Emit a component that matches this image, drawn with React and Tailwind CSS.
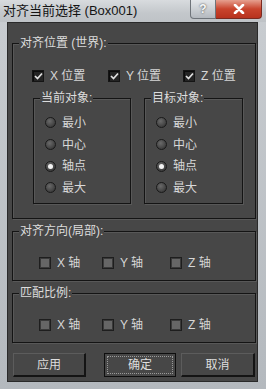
import React from "react";

const font = "font-['Liberation_Sans','Noto_Sans_CJK_SC',sans-serif]";

function Check({ checked }) {
  if (checked) {
    return (
      <span className="flex h-[12px] w-[12px] shrink-0 items-center justify-center border border-[#151515] bg-[#242424] shadow-[inset_1px_1px_0_#0c0c0c]">
        <svg width="9" height="8" viewBox="0 0 9 8">
          <path d="M1 4 L3.5 6.5 L8 1.5" fill="none" stroke="#e0e0e0" strokeWidth="1.7" />
        </svg>
      </span>
    );
  }
  return (
    <span className="flex h-[12px] w-[12px] shrink-0 items-center justify-center border border-[#1e1e1e] bg-[#3a3a3a]">
      <span className="h-[8px] w-[8px] bg-[#666666]" />
    </span>
  );
}

function Radio({ on }) {
  return (
    <span className="flex h-[11px] w-[11px] shrink-0 items-center justify-center rounded-full border border-[#1a1a1a] bg-[radial-gradient(circle_at_40%_35%,#6a6a6a,#2c2c2c)]">
      {on && <span className="h-[5px] w-[5px] rounded-full bg-[#f2f2f2]" />}
    </span>
  );
}

function Group({ label, className, children }) {
  return (
    <div className={"relative border border-[#141414] shadow-[inset_1px_1px_0_#585858,1px_1px_0_#585858] " + className}>
      <span className="absolute left-[6px] top-[-8px] bg-[#474747] px-[1px] text-[12px] leading-[14px] text-[#dcdcdc]">
        {label}
      </span>
      {children}
    </div>
  );
}

function Btn({ label, main }) {
  return (
    <div
      className={
        "flex h-[24px] items-center justify-center text-[12px] text-[#dedede] " +
        (main
          ? "border border-[#0e0e0e] bg-[#474747] p-[2px]"
          : "border-t border-l border-t-[#5c5c5c] border-l-[#5c5c5c] border-r-2 border-b-2 border-r-[#141414] border-b-[#141414] bg-[#474747]")
      }
    >
      {main ? (
        <span className="flex h-full w-full items-center justify-center border border-dotted border-[#9a9a9a]">
          {label}
        </span>
      ) : (
        label
      )}
    </div>
  );
}

function Item({ className, children, label }) {
  return (
    <div className={"flex shrink-0 items-center " + className}>
      {children}
      <span className="ml-[6px] whitespace-nowrap">{label}</span>
    </div>
  );
}

function AxisRow() {
  return (
    <div className="flex items-center pl-[26px] text-[12px] text-[#d6d6d6]">
      <Item className="w-[63px]" label="X 轴">
        <Check />
      </Item>
      <Item className="w-[68px]" label="Y 轴">
        <Check />
      </Item>
      <Item className="w-[60px]" label="Z 轴">
        <Check />
      </Item>
    </div>
  );
}

function RadioBox({ label, className }) {
  const items = ["最小", "中心", "轴点", "最大"];
  return (
    <Group label={label} className={"h-[106px] " + className}>
      <div className="flex flex-col pl-[11px] pt-[13px]">
        {items.map((t, i) => (
          <div key={t} className="flex h-[21.7px] items-center text-[12px] text-[#d8d8d8]">
            <Radio on={i === 2} />
            <span className="ml-[6px]">{t}</span>
          </div>
        ))}
      </div>
    </Group>
  );
}

export default function App() {
  return (
    <div className={"flex h-[389px] w-[266px] flex-col bg-[linear-gradient(180deg,#c9cdd1,#b4b9be)] " + font}>
      {/* title bar */}
      <div className="flex h-[22px] items-start bg-[linear-gradient(180deg,#d8dbde,#c3c7cb_60%,#bfc3c7)]">
        <span className="ml-[3px] mt-[3px] text-[13px] leading-[15px] text-[#141414]">对齐当前选择 (Box001)</span>
        <div className="ml-auto mr-[4px] flex h-[19px]">
          <div className="flex w-[26px] items-center justify-center rounded-bl-[4px] border border-[#6f747a] border-t-0 bg-[linear-gradient(180deg,#e4e7ea,#b4b9bf)] text-[12px] font-bold text-[#f8f8f8] [text-shadow:0_0_2px_#333]">
            ?
          </div>
          <div className="flex w-[46px] items-center justify-center rounded-br-[4px] border border-l-0 border-t-0 border-[#7a2a20] bg-[linear-gradient(180deg,#e6a08f,#c9442d_50%,#b7321e)]">
            <svg width="12" height="10" viewBox="0 0 12 10">
              <path d="M2 1 L10 9 M10 1 L2 9" stroke="#ffffff" strokeWidth="2.6" strokeLinecap="round" />
            </svg>
          </div>
        </div>
      </div>

      {/* client area */}
      <div className="ml-[7px] mr-[8px] h-[360px] border border-[#2a2a2a] bg-[#474747] pl-[4px] pr-[1px]">
        <Group label="对齐位置 (世界):" className="mt-[20px] h-[176px] w-[244px]">
          <div className="mt-[23px] flex items-center pl-[19px] text-[12px] text-[#d6d6d6]">
            <Item className="w-[76px]" label="X 位置">
              <Check checked />
            </Item>
            <Item className="w-[75px]" label="Y 位置">
              <Check checked />
            </Item>
            <Item className="w-[60px]" label="Z 位置">
              <Check checked />
            </Item>
          </div>
          <div className="mt-[13px] flex">
            <RadioBox label="当前对象:" className="ml-[20px] w-[98px]" />
            <RadioBox label="目标对象:" className="ml-[13px] w-[99px]" />
          </div>
        </Group>

        <Group label="对齐方向(局部):" className="mt-[12px] h-[50px] w-[244px]">
          <div className="mt-[22px]">
            <AxisRow />
          </div>
        </Group>

        <Group label="匹配比例:" className="mt-[12px] h-[50px] w-[244px]">
          <div className="mt-[22px]">
            <AxisRow />
          </div>
        </Group>

        <div className="mt-[10px] flex">
          <div className="ml-[1px] w-[73px]">
            <Btn label="应用" />
          </div>
          <div className="ml-[18px] w-[72px]">
            <Btn label="确定" main />
          </div>
          <div className="ml-[5px] w-[74px]">
            <Btn label="取消" />
          </div>
        </div>
      </div>
    </div>
  );
}
